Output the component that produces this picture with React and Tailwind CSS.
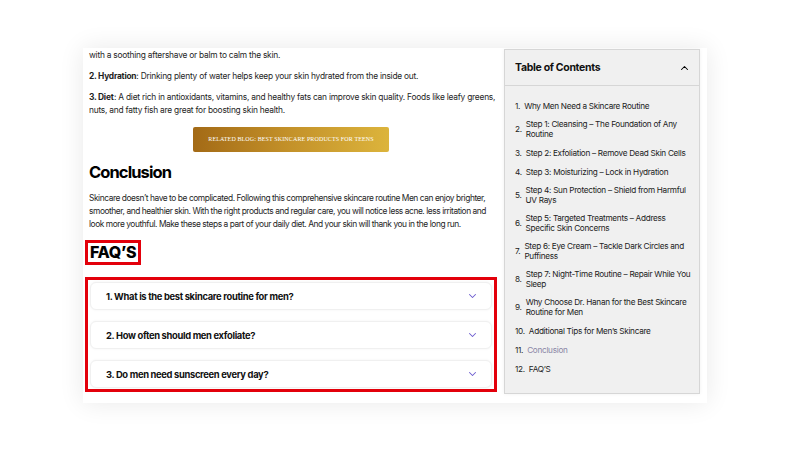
import React from "react";

const toc = [
  ["1.", "Why Men Need a Skincare Routine"],
  ["2.", "Step 1: Cleansing – The Foundation of Any Routine"],
  ["3.", "Step 2: Exfoliation – Remove Dead Skin Cells"],
  ["4.", "Step 3: Moisturizing – Lock in Hydration"],
  ["5.", "Step 4: Sun Protection – Shield from Harmful UV Rays"],
  ["6.", "Step 5: Targeted Treatments – Address Specific Skin Concerns"],
  ["7.", "Step 6: Eye Cream – Tackle Dark Circles and Puffiness"],
  ["8.", "Step 7: Night-Time Routine – Repair While You Sleep"],
  ["9.", "Why Choose Dr. Hanan for the Best Skincare Routine for Men"],
  ["10.", "Additional Tips for Men’s Skincare"],
  ["11.", "Conclusion"],
  ["12.", "FAQ’S"],
];

const faqs = [
  "1. What is the best skincare routine for men?",
  "2. How often should men exfoliate?",
  "3. Do men need sunscreen every day?",
];

function Chevron({ up, className }) {
  return (
    <svg viewBox="0 0 12 8" className={className} fill="none" stroke="currentColor" strokeWidth="1.4" strokeLinecap="round" strokeLinejoin="round">
      {up ? <path d="M2 6l4-4 4 4" /> : <path d="M2 2l4 4 4-4" />}
    </svg>
  );
}

export default function App() {
  return (
    <div className="w-[790px] h-[453px] bg-white overflow-hidden" style={{ fontFamily: "Inter, 'Noto Sans', sans-serif" }}>
      <div className="pt-[48px] pl-[83px]">
        <div className="w-[624px] h-[355px] bg-white shadow-[0_0_24px_rgba(0,0,0,0.09)] flex gap-[5px] pl-[6px] pr-[7px] overflow-hidden">
          <div className="w-[410px] shrink-0 text-[8.4px] leading-[13px] text-[#1e1e1e] tracking-[-0.028em]">
            <p className="mt-[1px]">with a soothing aftershave or balm to calm the skin.</p>
            <p className="mt-[8px]"><b className="font-bold">2. Hydration</b>: Drinking plenty of water helps keep your skin hydrated from the inside out.</p>
            <p className="mt-[8px]"><b className="font-bold mr-[0.5px]">3. Diet</b>: A diet rich in antioxidants, vitamins, and healthy fats can improve skin quality. Foods like leafy greens, nuts, and fatty fish are great for boosting skin health.</p>
            <div className="mt-[10px] w-[408px] flex justify-center">
              <div className="ml-[-4px] w-[196px] h-[25px] rounded-[2px] bg-[linear-gradient(90deg,#a36a16,#c4922a_50%,#dcb43c)] flex items-center justify-center text-white text-[6px] tracking-[0.02em]" style={{ fontFamily: "'Liberation Serif', serif" }}>
                RELATED BLOG: BEST SKINCARE PRODUCTS FOR TEENS
              </div>
            </div>
            <h2 className="mt-[8px] text-[16.5px] leading-[24px] font-bold text-black tracking-[-0.055em]">Conclusion</h2>
            <p className="mt-[8px] tracking-[-0.052em]">Skincare doesn’t have to be complicated. Following this comprehensive skincare routine Men can enjoy brighter, smoother, and healthier skin. With the right products and regular care, you will notice less acne. less irritation and look more youthful. Make these steps a part of your daily diet. And your skin will thank you in the long run.</p>
            <div className="mt-[9px] ml-[-4px] inline-block border-[3px] border-[#e3000b] px-[2px] h-[25px]">
              <span className="block text-[16px] leading-[19px] font-extrabold text-black tracking-[-0.02em]">FAQ’S</span>
            </div>
            <div className="mt-[12px] ml-[-4px] w-[412px] border-[3px] border-[#e3000b] px-[2px] pt-[2px] pb-[1px] flex flex-col gap-[11px]">
              {faqs.map((q) => (
                <div key={q} className="h-[28px] rounded-[6px] bg-white border border-[#f0f0f0] shadow-[0_0_3px_rgba(0,0,0,0.05)] flex items-center justify-between pl-[15px] pr-[14px]">
                  <span className="text-[9.4px] font-bold text-[#111] tracking-[-0.035em]">{q}</span>
                  <Chevron className="w-[9px] h-[6px] text-[#6c5ccf]" />
                </div>
              ))}
            </div>
          </div>
          <div className="w-[197px] h-[345px] mt-[1px] border border-[#d6d6d6] bg-[#f0f0f0] shadow-[0_0_4px_rgba(0,0,0,0.06)]">
            <div className="h-[36px] border-b border-[#d6d6d6] flex items-center justify-between pl-[10px] pr-[10px]">
              <span className="text-[10.5px] font-bold text-[#111] tracking-[-0.03em]">Table of Contents</span>
              <Chevron up className="w-[9px] h-[6px] text-black" />
            </div>
            <ol className="pt-[14px] pl-[10px] pr-[8px] flex flex-col gap-[8px] text-[8.2px] leading-[10px] text-[#222] tracking-[-0.035em]">
              {toc.map(([n, t], i) => (
                <li key={n} className="flex items-center gap-[4px] min-h-[11px]">
                  <span className="shrink-0">{n}</span>
                  <span className={i === 10 ? "text-[#8a86a6]" : ""}>{t}</span>
                </li>
              ))}
            </ol>
          </div>
        </div>
      </div>
    </div>
  );
}
